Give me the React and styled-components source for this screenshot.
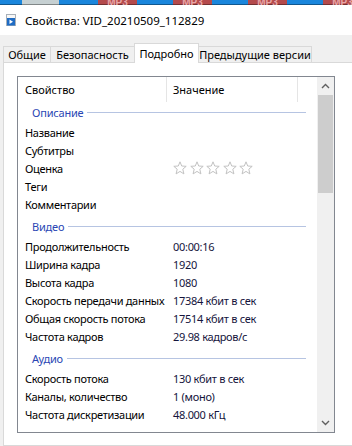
import React from 'react';
import styled, { createGlobalStyle } from 'styled-components';

const GlobalStyle = createGlobalStyle`
  html, body { margin: 0; padding: 0; }
  body {
    font-family: "Noto Sans", "Open Sans", sans-serif;
    font-size: 11px;
    color: #000;
  }
`;

const Window = styled.div`
  width: 352px;
  height: 446px;
  overflow: hidden;
  background: #f0f0f0;
  display: flex;
  flex-direction: column;
`;

const TaskStrip = styled.div`
  display: flex;
  height: 5px;
  flex: none;
`;

const Seg = styled.div`
  width: ${(p) => p.$w}px;
  flex: none;
  background: ${(p) => p.$c};
  box-shadow: inset 0 -1px 0 rgba(0, 0, 0, 0.35);
  overflow: hidden;
  display: flex;
  justify-content: center;
  align-items: flex-end;
`;

const SegLabel = styled.span`
  font-family: "Liberation Sans", sans-serif;
  font-weight: bold;
  font-size: 10px;
  line-height: 10px;
  margin-bottom: -3px;
  color: #e7a7a7;
`;

const TitleBar = styled.div`
  height: 30px;
  flex: none;
  background: #fff;
  display: flex;
  align-items: center;
  padding-left: 6px;
  gap: 9px;
`;

const TitleText = styled.span`
  font-size: 11.5px;
  color: #000;
`;

const Body = styled.div`
  flex: 1;
  display: flex;
  flex-direction: column;
  padding: 8px 0 0 3px;
`;

const TabRow = styled.div`
  display: flex;
  align-items: flex-end;
  height: 19px;
  flex: none;
  position: relative;
  z-index: 1;
`;

const Tab = styled.div`
  box-sizing: border-box;
  width: ${(p) => p.$w}px;
  height: ${(p) => (p.$active ? 20 : 16)}px;
  margin-left: ${(p) => (p.$first ? 0 : -1)}px;
  margin-bottom: ${(p) => (p.$active ? -1 : 0)}px;
  border: 1px solid #d9d9d9;
  border-bottom: none;
  background: ${(p) => (p.$active ? '#fff' : '#f0f0f0')};
  position: relative;
  z-index: ${(p) => (p.$active ? 2 : 1)};
  display: flex;
  align-items: center;
  justify-content: center;
  white-space: nowrap;
`;

const Panel = styled.div`
  flex: 1;
  width: 360px;
  box-sizing: border-box;
  background: #fff;
  border: 1px solid #d9d9d9;
  padding: 13px 0 0 13px;
`;

const ListBox = styled.div`
  width: 318px;
  height: 357px;
  box-sizing: border-box;
  border: 1px solid #828790;
  background: #fff;
  display: flex;
`;

const ListArea = styled.div`
  flex: 1;
  overflow: hidden;
  display: flex;
  flex-direction: column;
`;

const HeaderRow = styled.div`
  height: 25px;
  flex: none;
  display: flex;
`;

const HeaderCell = styled.div`
  box-sizing: border-box;
  width: ${(p) => p.$w}px;
  padding-left: ${(p) => p.$pad}px;
  border-right: 1px solid #e5e5e5;
  display: flex;
  align-items: center;
  white-space: nowrap;
`;

const GroupHeader = styled.div`
  height: ${(p) => (p.$first ? 21 : 24)}px;
  flex: none;
  box-sizing: border-box;
  padding: ${(p) => (p.$first ? 0 : 2)}px 11px 0 14px;
  display: flex;
  align-items: center;
  gap: 4px;
  color: #2a46b4;
  white-space: nowrap;
  letter-spacing: -0.2px;
`;

const GroupLine = styled.div`
  flex: 1;
  height: 1px;
  background: #b6c4e2;
`;

const Row = styled.div`
  height: 18px;
  flex: none;
  display: flex;
  align-items: center;
  white-space: nowrap;
  letter-spacing: -0.3px;
`;

const Label = styled.div`
  box-sizing: border-box;
  width: 149px;
  padding-left: 7px;
  flex: none;
`;

const Value = styled.div`
  padding-left: 6px;
  color: #14143c;
  display: flex;
  align-items: center;
`;

const Stars = styled.div`
  display: flex;
  gap: 2.5px;
`;

const ScrollBar = styled.div`
  width: 17px;
  flex: none;
  background: #f0f0f0;
  display: flex;
  flex-direction: column;
`;

const ArrowBtn = styled.div`
  height: 18px;
  flex: none;
  display: flex;
  align-items: center;
  justify-content: center;
`;

const Thumb = styled.div`
  height: 98px;
  flex: none;
  margin: 0 1px;
  background: #cdcdcd;
`;

const Track = styled.div`
  flex: 1;
`;

const Star = () => (
  <svg width="14" height="14" viewBox="0 0 14 14">
    <polygon
      points="7,0.8 8.7,5 13.2,5.3 9.8,8.2 10.9,12.9 7,10.4 3.1,12.9 4.2,8.2 0.8,5.3 5.3,5"
      fill="none"
      stroke="#c2c2c2"
      strokeWidth="1"
      strokeLinejoin="round"
    />
  </svg>
);

const Chevron = ({ down }) => (
  <svg width="9" height="6" viewBox="0 0 9 6">
    <polyline
      points={down ? '1,1 4.5,4.5 8,1' : '1,5 4.5,1.5 8,5'}
      fill="none"
      stroke="#606060"
      strokeWidth="1.4"
    />
  </svg>
);

const FileIcon = () => (
  <svg width="10" height="12" viewBox="0 0 10 12">
    <rect x="0.5" y="0.5" width="9" height="11" fill="#f7f7f7" stroke="#a8b0b8" />
    <rect x="1" y="4" width="8" height="7.5" fill="#1f6cc4" />
    <polygon points="3.5,5.5 3.5,10 7,7.75" fill="#fff" />
  </svg>
);

const strip = [
  { w: 22, c: '#1a86dc' },
  { w: 37, c: '#c6d0d2' },
  { w: 39, c: '#1a86dc' },
  { w: 39, c: '#b44a4c', t: 'MP3' },
  { w: 36, c: '#1a86dc' },
  { w: 39, c: '#b44a4c', t: 'MP3' },
  { w: 36, c: '#1a86dc' },
  { w: 39, c: '#b44a4c', t: 'MP3' },
  { w: 36, c: '#1a86dc' },
  { w: 39, c: '#b44a4c', t: 'MP3' },
];

const tabs = [
  { t: 'Общие', w: 48 },
  { t: 'Безопасность', w: 85 },
  { t: 'Подробно', w: 65, active: true },
  { t: 'Предыдущие версии', w: 114 },
];

const STARS = 'stars';

const groups = [
  {
    title: 'Описание',
    rows: [
      ['Название', ''],
      ['Субтитры', ''],
      ['Оценка', STARS],
      ['Теги', ''],
      ['Комментарии', ''],
    ],
  },
  {
    title: 'Видео',
    rows: [
      ['Продолжительность', '00:00:16'],
      ['Ширина кадра', '1920'],
      ['Высота кадра', '1080'],
      ['Скорость передачи данных', '17384 кбит в сек'],
      ['Общая скорость потока', '17514 кбит в сек'],
      ['Частота кадров', '29.98 кадров/с'],
    ],
  },
  {
    title: 'Аудио',
    rows: [
      ['Скорость потока', '130 кбит в сек'],
      ['Каналы, количество', '1 (моно)'],
      ['Частота дискретизации', '48.000 кГц'],
    ],
  },
  { title: 'Носитель', rows: [['Исполнитель', '']] },
];

export default function App() {
  return (
    <>
      <GlobalStyle />
      <Window>
        <TaskStrip>
          {strip.map((s, i) => (
            <Seg key={i} $w={s.w} $c={s.c}>
              {s.t && <SegLabel>{s.t}</SegLabel>}
            </Seg>
          ))}
        </TaskStrip>
        <TitleBar>
          <FileIcon />
          <TitleText>Свойства: VID_20210509_112829</TitleText>
        </TitleBar>
        <Body>
          <TabRow>
            {tabs.map((t, i) => (
              <Tab key={t.t} $w={t.w} $active={t.active} $first={i === 0}>
                {t.t}
              </Tab>
            ))}
          </TabRow>
          <Panel>
            <ListBox>
              <ListArea>
                <HeaderRow>
                  <HeaderCell $w={149} $pad={7}>Свойство</HeaderCell>
                  <HeaderCell $w={131} $pad={6}>Значение</HeaderCell>
                </HeaderRow>
                {groups.map((g, gi) => (
                  <React.Fragment key={g.title}>
                    <GroupHeader $first={gi === 0}>
                      {g.title}
                      <GroupLine />
                    </GroupHeader>
                    {g.rows.map(([k, v]) => (
                      <Row key={k}>
                        <Label>{k}</Label>
                        <Value>
                          {v === STARS ? (
                            <Stars>
                              {[0, 1, 2, 3, 4].map((n) => (
                                <Star key={n} />
                              ))}
                            </Stars>
                          ) : (
                            v
                          )}
                        </Value>
                      </Row>
                    ))}
                  </React.Fragment>
                ))}
              </ListArea>
              <ScrollBar>
                <ArrowBtn>
                  <Chevron />
                </ArrowBtn>
                <Thumb />
                <Track />
                <ArrowBtn>
                  <Chevron down />
                </ArrowBtn>
              </ScrollBar>
            </ListBox>
          </Panel>
        </Body>
      </Window>
    </>
  );
}
